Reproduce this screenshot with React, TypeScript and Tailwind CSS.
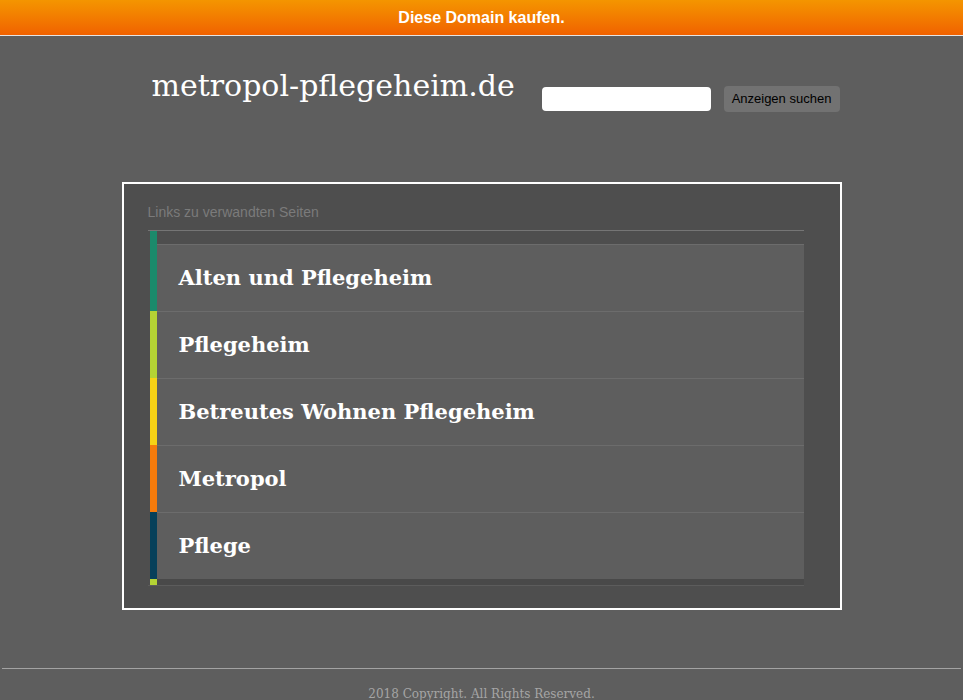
const links = [
  { label: "Alten und Pflegeheim", color: "bg-[#1b8a6b]" },
  { label: "Pflegeheim", color: "bg-[#b4d334]" },
  { label: "Betreutes Wohnen Pflegeheim", color: "bg-[#f7d215]" },
  { label: "Metropol", color: "bg-[#f57b0c]" },
  { label: "Pflege", color: "bg-[#06405a]" },
]

export default function App() {
  return (
    <div className="min-h-[700px] bg-[#5e5e5e] font-['Liberation_Sans',Arial,sans-serif]">
      <div className="flex h-[36px] items-center justify-center border-b border-[#e4e4e4] bg-gradient-to-b from-[#f49500] to-[#f06100]">
        <a className="text-[16px] font-bold text-white">Diese Domain kaufen.</a>
      </div>

      <div className="mx-auto flex h-[75px] w-[720px] items-start pt-[30px]">
        <h1 className="mt-[3px] pl-[30px] font-['DejaVu_Serif',serif] text-[30px] leading-[34px] text-white">
          metropol-pflegeheim.de
        </h1>
        <form className="ml-auto mr-[2px] mt-[20px] flex items-center">
          <input className="h-[24px] w-[169px] rounded-[4px] bg-white" />
          <button
            type="button"
            className="ml-[13px] h-[26px] w-[116px] rounded-[4px] bg-[#727272] text-[13px] text-black"
          >
            Anzeigen suchen
          </button>
        </form>
      </div>

      <div className="mx-auto mt-[71px] w-[720px] border-2 border-white bg-[#4e4e4e] pb-[22px] pl-[24px] pr-[36px] pt-[20px]">
        <div className="border-b border-[#757575] pb-[9px] text-[14px] leading-[17px] text-[#7b7b7b]">
          Links zu verwandten Seiten
        </div>
        <div className="ml-[2px] flex flex-col">
          <div className="flex h-[13px]">
            <div className="w-[7px] bg-[#1b8a6b]" />
          </div>
          {links.map((l) => (
            <div key={l.label} className="flex h-[67px]">
              <div className={`w-[7px] ${l.color}`} />
              <a className="flex flex-1 items-center border-t border-[#6c6c6c] bg-[#5e5e5e] pl-[22px] font-['DejaVu_Serif',serif] text-[21px] font-bold text-white">
                {l.label}
              </a>
            </div>
          ))}
          <div className="flex h-[6px]">
            <div className="w-[7px] bg-[#b4d334]" />
            <div className="flex-1 bg-[#494949]" />
          </div>
        </div>
        <div className="h-px bg-[#5c5c5c]" />
      </div>

      <div className="mx-[2px] mt-[58px] border-t border-[#a3a3a3] pt-[16px] text-center font-['DejaVu_Serif',serif] text-[12px] text-[#a5a5a5]">
        2018 Copyright. All Rights Reserved.
      </div>
    </div>
  )
}
